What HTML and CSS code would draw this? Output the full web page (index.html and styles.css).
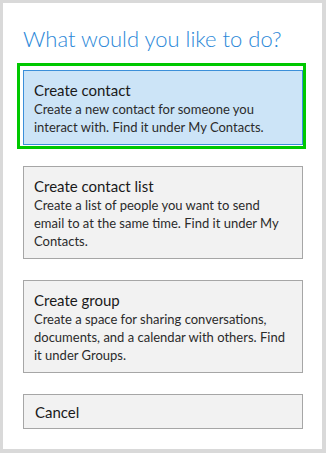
FILE: index.html
```html
<!DOCTYPE html>
<html>
<head>
<meta charset="utf-8">
<link rel="stylesheet" href="styles.css">
</head>
<body>
<div class="dialog">
  <h1 class="heading">What would you like to do?</h1>
  <div class="options">
    <div class="option option-selected">
      <div class="option-title">Create contact</div>
      <div class="option-desc">Create a new contact for someone you interact with. Find it under My Contacts.</div>
    </div>
    <div class="option">
      <div class="option-title">Create contact list</div>
      <div class="option-desc">Create a list of people you want to send email to at the same time. Find it under My Contacts.</div>
    </div>
    <div class="option">
      <div class="option-title">Create group</div>
      <div class="option-desc">Create a space for sharing conversations, documents, and a calendar with others. Find it under Groups.</div>
    </div>
    <div class="option option-cancel">
      <div class="option-title">Cancel</div>
    </div>
  </div>
</div>
</body>
</html>
```
FILE: styles.css
```css
html, body {
  margin: 0;
  padding: 0;
}
body {
  background: #d9d9d9;
  width: 326px;
  height: 453px;
  overflow: hidden;
  font-family: Lato, "Noto Sans", sans-serif;
}
.dialog {
  margin: 3px 4px 4px 3px;
  height: 446px;
  background: #ffffff;
  box-sizing: border-box;
  padding: 22px 19px 0 20px;
}
.heading {
  margin: 0;
  font-size: 22px;
  font-weight: 300;
  line-height: 28px;
  color: #2b88d8;
}
.options {
  margin-top: 17px;
  display: flex;
  flex-direction: column;
  gap: 20px;
}
.option {
  position: relative;
  background: #f2f2f2;
  border: 1px solid #a6a6a6;
  padding: 9px 10px 8px 10px;
  color: #222222;
}
.option + .option {
  margin-top: 1px;
}
.option-selected {
  background: #cce4f7;
  border-color: #3b8fd9;
}
.option-selected::after {
  content: "";
  position: absolute;
  left: -7px;
  top: -8px;
  right: -4px;
  bottom: -5px;
  border: 3px solid #00c800;
  pointer-events: none;
}
.option-title {
  font-size: 15px;
  line-height: 20px;
  color: #1a1a1a;
}
.option-desc {
  font-size: 13px;
  line-height: 18px;
  color: #2b2b2b;
}
.option-cancel {
  padding: 7px 10px 6px 11px;
}
```
